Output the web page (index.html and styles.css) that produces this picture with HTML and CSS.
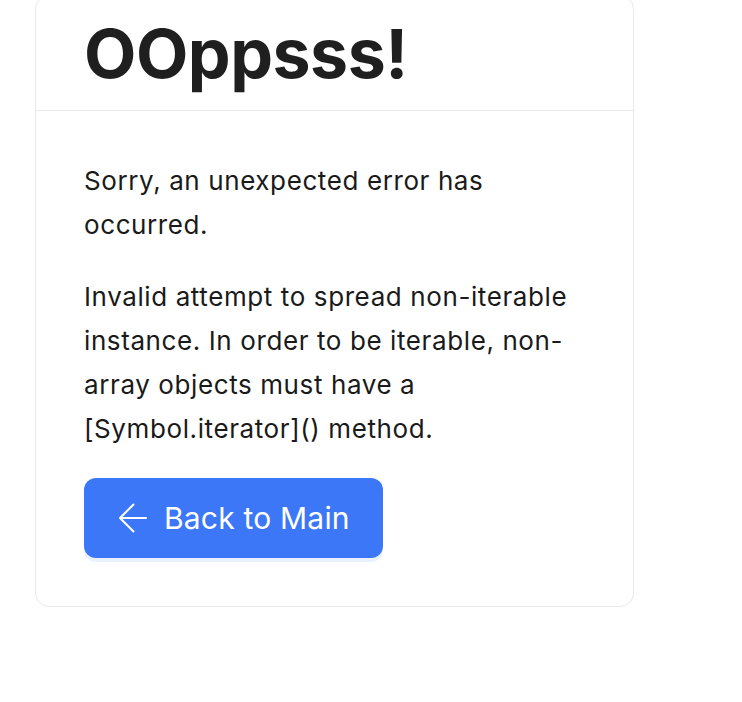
FILE: index.html
```html
<!DOCTYPE html>
<html lang="en">
<head>
<meta charset="utf-8">
<title>Error</title>
<link rel="stylesheet" href="styles.css">
</head>
<body>
<main class="page">
  <section class="card">
    <header class="card-header">
      <h1 class="title">OOppsss!</h1>
    </header>
    <div class="card-body">
      <p class="text">Sorry, an unexpected error has occurred.</p>
      <p class="text">Invalid attempt to spread non-iterable instance. In order to be iterable, non-array objects must have a [Symbol.iterator]() method.</p>
      <a class="btn" href="#">
        <svg class="btn-icon" viewBox="0 0 30 30" width="30" height="30" fill="none" stroke="currentColor" stroke-width="2" stroke-linecap="round" stroke-linejoin="round"><path d="M2 15H28M15.5 1.5L2 15l13.5 13.5"/></svg>
        <span>Back to Main</span>
      </a>
    </div>
  </section>
</main>
</body>
</html>
```

FILE: styles.css
```css
* { box-sizing: border-box; }
html, body { margin: 0; padding: 0; background: #fff; }
body {
  font-family: Inter, "Noto Sans", sans-serif;
  color: #1f1f1f;
}
.page {
  padding: 0 0 0 35px;
}
.card {
  width: 599px;
  margin-top: -5px;
  border: 1px solid #e9e9e9;
  border-radius: 14px;
  background: #fff;
}
.card-header {
  padding: 0 48px;
  border-bottom: 1px solid #e9e9e9;
}
.title {
  margin: 0;
  font-size: 68px;
  font-weight: 700;
  line-height: 114px;
  letter-spacing: -0.5px;
  color: #1f1f1f;
}
.card-body {
  padding: 48px;
}
.text {
  margin: 0 0 29px;
  font-size: 26px;
  line-height: 43.7px;
  letter-spacing: 0.6px;
  color: #1a1a1a;
}
.text + .btn { margin-top: -1px; }
.btn {
  display: inline-flex;
  align-items: center;
  gap: 16px;
  height: 80px;
  padding: 0 33px 0 34px;
  border-radius: 12px;
  background: #3b77f6;
  color: #fff;
  text-decoration: none;
  font-size: 30px;
  letter-spacing: 0.2px;
  box-shadow: 0 4px 0 #eaf1fe;
}
.btn-icon { display: block; }
```
